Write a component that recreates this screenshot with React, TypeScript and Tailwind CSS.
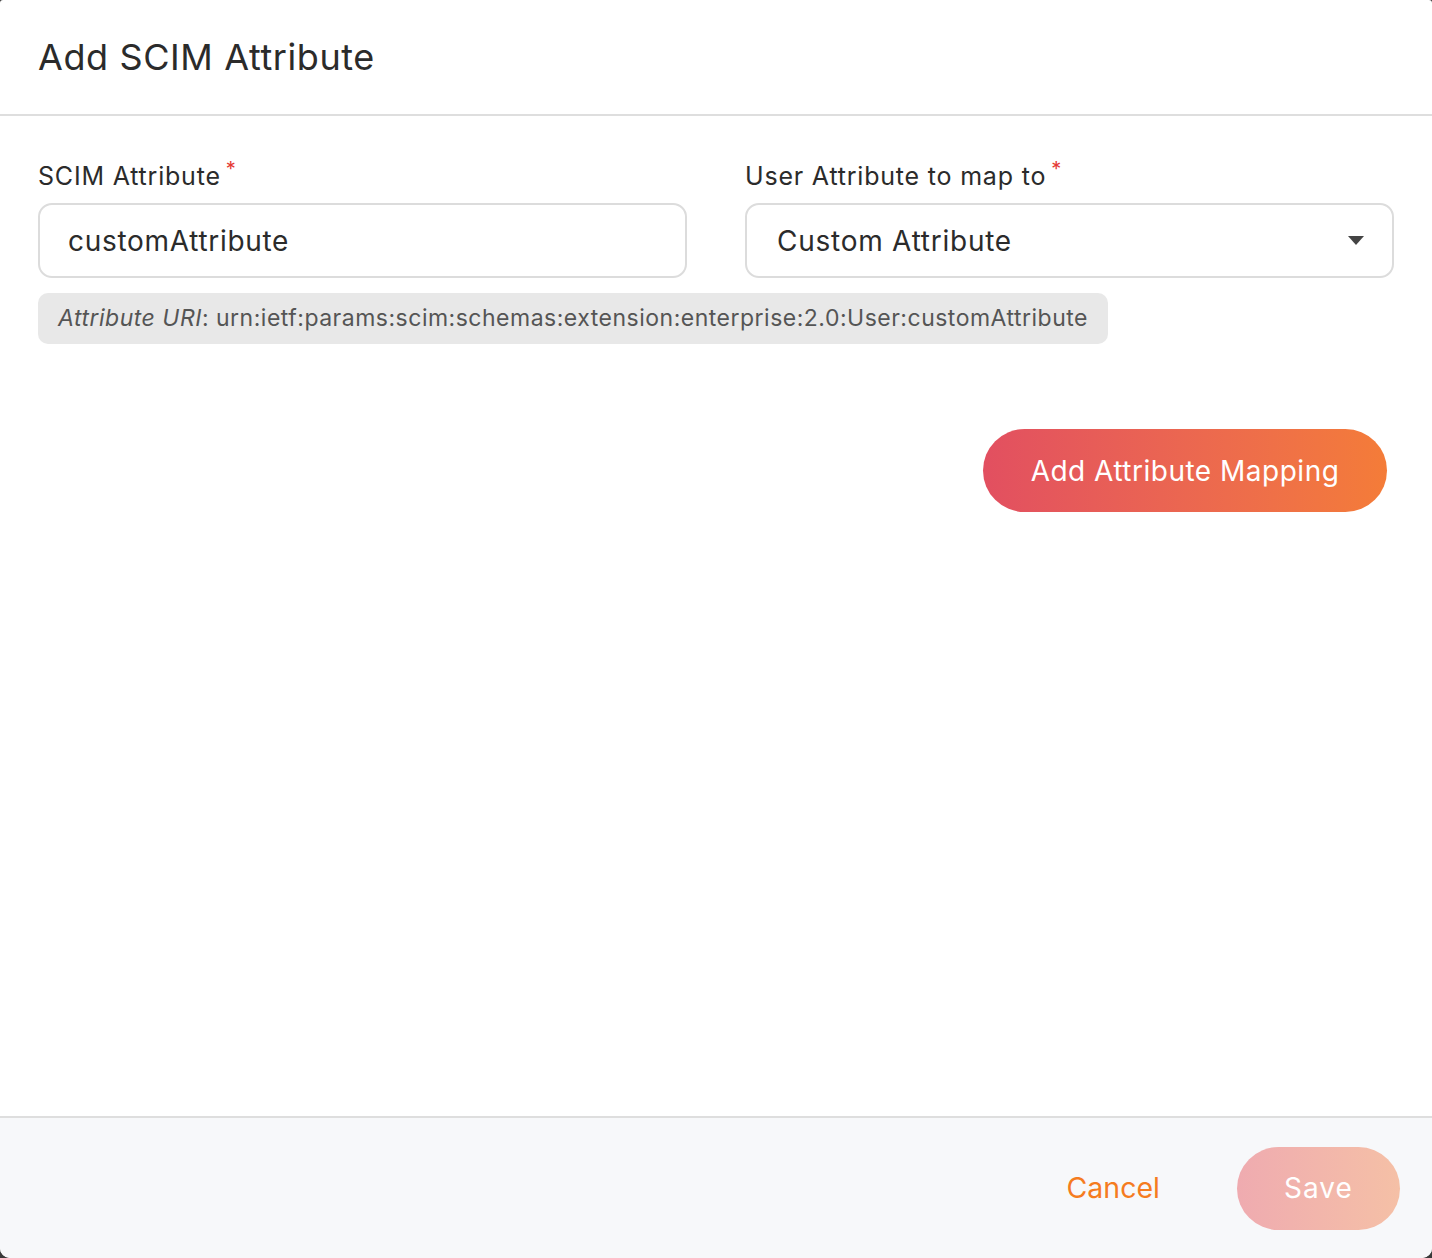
import React, { useState } from "react";

const font = { fontFamily: "Inter, 'Noto Sans', sans-serif" };

const Label: React.FC<{ text: string }> = ({ text }) => (
  <label className="flex items-start h-[32px] text-[25px] tracking-[0.8px] leading-[32px] text-[#2b2b2b]">
    {text}
    <span className="ml-[5px] text-[20px] leading-[18px] text-[#e53935]">*</span>
  </label>
);

const App: React.FC = () => {
  const [scim, setScim] = useState("customAttribute");

  return (
    <div className="w-[1432px] h-[1258px] bg-[#3a3a3a]" style={font}>
      <div className="flex flex-col h-full bg-white rounded-t-[3px] rounded-b-[10px] overflow-hidden">
        {/* Header */}
        <div className="h-[116px] shrink-0 flex items-center px-[38px] border-b-2 border-[#dedede]">
          <h1 className="text-[36px] tracking-[0.6px] text-[#2b2b2b] leading-none">Add SCIM Attribute</h1>
        </div>

        {/* Body */}
        <div className="flex-1 px-[38px] pt-[44px]">
          <div className="grid grid-cols-2 gap-x-[58px]">
            <div className="flex flex-col gap-[11px]">
              <Label text="SCIM Attribute" />
              <input
                value={scim}
                onChange={(e) => setScim(e.target.value)}
                className="h-[75px] rounded-[14px] border-2 border-[#dcdcdc] px-[28px] text-[28px] tracking-[0.7px] text-[#2b2b2b] outline-none"
              />
            </div>
            <div className="flex flex-col gap-[11px]">
              <Label text="User Attribute to map to" />
              <div className="h-[75px] rounded-[14px] border-2 border-[#dcdcdc] pl-[30px] pr-[28px] flex items-center justify-between">
                <span className="text-[28px] tracking-[0.75px] text-[#2b2b2b]">Custom Attribute</span>
                <svg width="16" height="10" viewBox="0 0 16 10">
                  <path d="M0 0 L16 0 L8 9 Z" fill="#444" />
                </svg>
              </div>
            </div>
          </div>

          <div className="mt-[15px] w-fit h-[51px] flex items-center px-[20px] rounded-[10px] bg-[#e8e8e8] text-[23px] tracking-[0.5px] text-[#555]">
            <span className="italic">Attribute URI</span>: urn:ietf:params:scim:schemas:extension:enterprise:2.0:User:customAttribute
          </div>

          <div className="flex justify-end mt-[85px] pr-[7px]">
            <button className="w-[404px] h-[83px] rounded-full bg-gradient-to-r from-[#e24f60] to-[#f47c38] text-white text-[28px] tracking-[0.5px]">
              Add Attribute Mapping
            </button>
          </div>
        </div>

        {/* Footer */}
        <div className="h-[142px] shrink-0 bg-[#f7f8fa] border-t-2 border-[#dedede] flex items-center justify-end pr-[32px] gap-[77px]">
          <button className="text-[28.5px] text-[#f57c1f]">Cancel</button>
          <button className="w-[163px] h-[83px] rounded-full bg-gradient-to-r from-[#efabb0] to-[#f5c0a6] text-white text-[28px] tracking-[1px]">
            Save
          </button>
        </div>
      </div>
    </div>
  );
};

export default App;
